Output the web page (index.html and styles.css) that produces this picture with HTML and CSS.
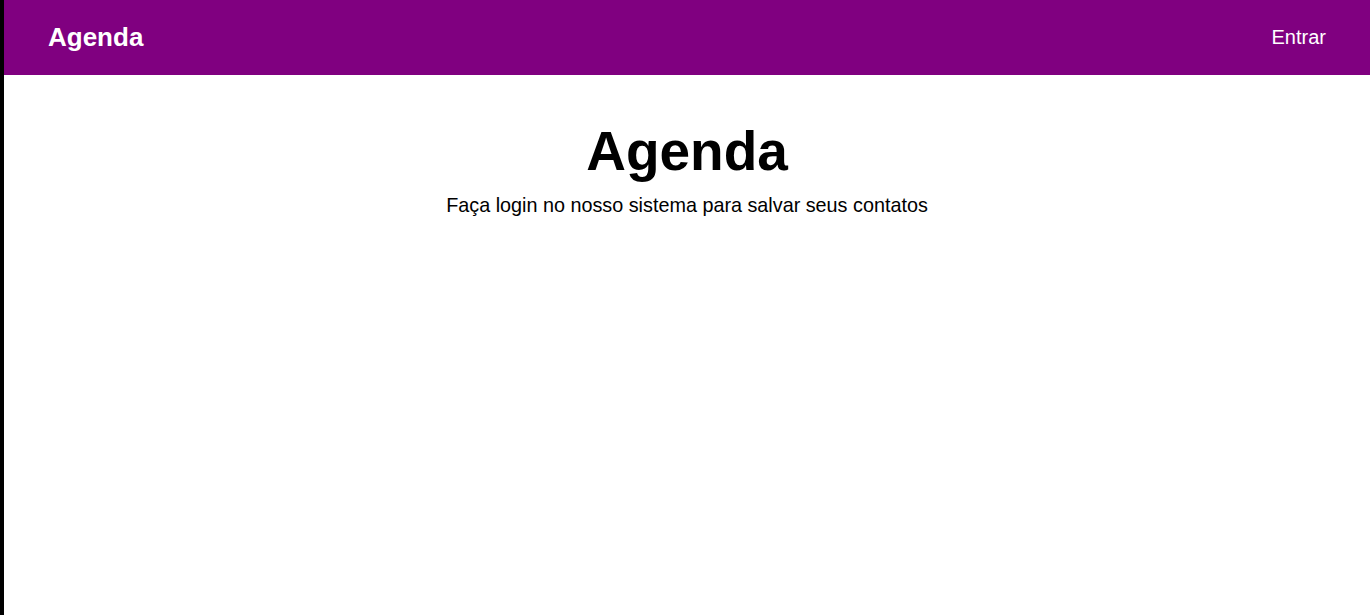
FILE: index.html
```html
<!DOCTYPE html>
<html lang="pt-BR">
<head>
<meta charset="utf-8">
<title>Agenda</title>
<link rel="stylesheet" href="styles.css">
</head>
<body>
<div class="page">
  <header class="topbar">
    <span class="brand">Agenda</span>
    <a class="login" href="#">Entrar</a>
  </header>
  <main class="hero">
    <h1 class="hero-title">Agenda</h1>
    <p class="hero-text">Faça login no nosso sistema para salvar seus contatos</p>
  </main>
</div>
</body>
</html>
```
FILE: styles.css
```css
html, body {
  margin: 0;
  padding: 0;
  height: 100%;
}
body {
  background: #fff;
  font-family: "Liberation Sans", Arial, sans-serif;
  color: #000;
}
.page {
  border-left: 4px solid #000;
  min-height: 100%;
  box-sizing: border-box;
}
.topbar {
  height: 75px;
  background: #800080;
  display: flex;
  align-items: center;
  justify-content: space-between;
  padding: 0 44px 0 44px;
  box-sizing: border-box;
}
.brand {
  color: #fff;
  font-weight: bold;
  font-size: 26px;
}
.login {
  color: #fff;
  text-decoration: none;
  font-size: 20px;
}
.hero {
  display: flex;
  flex-direction: column;
  align-items: center;
  padding-top: 44px;
}
.hero-title {
  margin: 0;
  font-size: 55px;
  line-height: 64px;
  font-weight: bold;
}
.hero-text {
  margin: 10px 0 0;
  font-size: 19.8px;
  line-height: 24px;
}
```
